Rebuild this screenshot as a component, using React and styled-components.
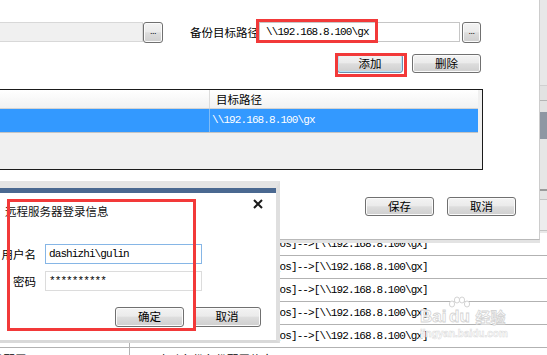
import React from 'react';
import styled, { createGlobalStyle, css } from 'styled-components';

const GlobalStyle = createGlobalStyle`
  html, body {
    margin: 0;
    padding: 0;
    background: #fff;
  }
  body {
    width: 547px;
    height: 355px;
    overflow: hidden;
    font-family: 'Noto Sans CJK SC', 'Noto Sans', sans-serif;
  }
`;

const cjk = css`
  font-family: 'Noto Sans CJK SC', 'Noto Sans', sans-serif;
  font-size: 11.5px;
  color: #111;
`;

const mono = css`
  font-family: 'Liberation Mono', 'Noto Sans CJK SC', monospace;
  font-size: 11px;
  letter-spacing: -0.9px;
`;

const Desktop = styled.div`
  position: relative;
  width: 547px;
  height: 355px;
  overflow: hidden;
  background: #fff;
`;

// window lying behind everything
const BackWindow = styled.div`
  display: flex;
  flex-direction: column;
  width: 607px;
  height: 100%;
  margin-left: -60px;
`;

const BackTop = styled.div`
  display: flex;
  justify-content: flex-end;
  height: 233px;
  flex-shrink: 0;
`;

const SideStrip = styled.div`
  display: flex;
  flex-direction: column;
  width: 7px;
  background: #e8e8e8;
`;

const StripPart = styled.div`
  height: ${(p) => p.$h}px;
  flex-shrink: 0;
  background: ${(p) => p.$bg || 'transparent'};
`;

const ListRow = styled.div`
  display: grid;
  grid-template-columns: 190px 1fr;
  height: 23px;
  flex-shrink: 0;
  box-sizing: border-box;
  border-bottom: 1px solid #b2b2b2;
`;

const ListCell = styled.div`
  padding-left: ${(p) => (p.$first ? 6 : 7)}px;
  line-height: 22px;
  white-space: nowrap;
  overflow: hidden;
  ${(p) => (p.$mono ? mono : cjk)}
  color: #000;
  ${(p) =>
    p.$first &&
    css`
      border-right: 1px solid #b2b2b2;
    `}
`;

// main settings window
const MainWindow = styled.div`
  position: absolute;
  left: -20px;
  top: 0;
  width: 560px;
  height: 240px;
  box-sizing: border-box;
  padding-top: 22px;
  background: #fff;
  border-right: 1px solid #cdcdcd;
  border-bottom: 1px solid #b9b9b9;
  box-shadow: 0 3px 0 #e3e3e3;
`;

const PathRow = styled.div`
  display: flex;
  align-items: flex-start;
  height: 21px;
`;

const FieldLabel = styled.span`
  ${cjk}
  color: #000;
  line-height: 20px;
  margin-left: ${(p) => p.$ml || 0}px;
  width: ${(p) => (p.$w ? `${p.$w}px` : 'auto')};
  text-align: ${(p) => p.$align || 'left'};
  margin-right: ${(p) => p.$mr || 0}px;
  white-space: nowrap;
`;

const Field = styled.input`
  box-sizing: border-box;
  width: ${(p) => p.$w}px;
  height: 20px;
  margin: 0;
  padding: 0 0 0 ${(p) => p.$pad || 5}px;
  border: 1px solid ${(p) => p.$border || '#c6c6c6'};
  background: ${(p) => p.$bg || '#fff'};
  outline: none;
  ${mono}
  color: #000;
`;

const FieldWrap = styled.div`
  position: relative;
  display: flex;
`;

const RedMark = styled.span`
  position: absolute;
  left: ${(p) => p.$x}px;
  top: ${(p) => p.$y}px;
  width: ${(p) => p.$w}px;
  height: ${(p) => p.$h}px;
  box-sizing: border-box;
  border: 3px solid #f23939;
  pointer-events: none;
`;

const Button = styled.button`
  position: relative;
  box-sizing: border-box;
  width: ${(p) => p.$w}px;
  height: ${(p) => p.$h || 19}px;
  margin: 0;
  padding: 0;
  ${cjk}
  color: #000;
  line-height: 1;
  border: 1px solid #707070;
  border-radius: 3px;
  background: linear-gradient(#f3f3f3 0%, #ebebeb 45%, #dddddd 52%, #cfcfcf 100%);
  box-shadow: inset 0 0 0 1px #fbfbfb;
  ${(p) =>
    p.$default &&
    css`
      border-color: #6d8fae;
      box-shadow: inset 0 0 0 1px #b9e4f7;
    `}
`;

const BrowseButton = styled(Button)`
  width: ${(p) => p.$w || 20}px;
  height: 21px;
  margin-left: ${(p) => p.$ml || 0}px;
  font-family: 'Liberation Sans', sans-serif;
  font-size: 9px;
  letter-spacing: -0.5px;
  padding-bottom: 2px;
`;

const ActionRow = styled.div`
  display: flex;
  justify-content: flex-end;
  gap: ${(p) => p.$gap}px;
  margin-top: ${(p) => p.$mt}px;
  padding-right: ${(p) => p.$pr}px;
`;

const Table = styled.div`
  margin-top: 16px;
  width: 503px;
  height: 81px;
  box-sizing: border-box;
  border: 1px solid #1b1b1b;
  border-left: none;
  padding-right: 4px;
  background: #f0f0f0;
`;

const TableHead = styled.div`
  display: grid;
  grid-template-columns: 230px 1fr;
  height: 19px;
  box-sizing: border-box;
  border-bottom: 1px solid #d3d3d3;
  background: linear-gradient(#ffffff, #f2f2f2);
`;

const TableRow = styled.div`
  display: grid;
  grid-template-columns: 230px 1fr;
  height: 24px;
  box-sizing: border-box;
  border-bottom: 1px solid #c4c4c4;
  background: #3399ff;
`;

const HeadCell = styled.div`
  ${cjk}
  color: #000;
  line-height: 18px;
  padding-left: 6px;
  ${(p) =>
    p.$first &&
    css`
      border-right: 1px solid #dcdcdc;
    `}
`;

const RowCell = styled.div`
  ${mono}
  color: #fff;
  line-height: 23px;
  padding-left: 2px;
  white-space: nowrap;
  ${(p) =>
    p.$first &&
    css`
      border-right: 1px solid #7fbcf7;
    `}
`;

// login dialog
const Dialog = styled.div`
  position: absolute;
  left: -20px;
  top: 181px;
  width: 300px;
  box-sizing: border-box;
  border-top: 7px solid #e4e4e4;
  border-right: 4px solid #dfdfdf;
  border-bottom: 3px solid #d9d9d9;
`;

const DialogBody = styled.div`
  position: relative;
  height: 147px;
  border-top: 5px solid #4a6890;
  background: #fff;
`;

const DialogHead = styled.div`
  display: flex;
  justify-content: space-between;
  align-items: flex-start;
  height: 51px;
  padding: 0 13px 0 25px;
`;

const DialogTitle = styled.span`
  ${cjk}
  color: #111;
  line-height: 14px;
  margin-top: 11px;
`;

const CloseIcon = styled.svg`
  margin-top: 6px;
`;

const FormRow = styled.div`
  display: flex;
  align-items: center;
  height: 20px;
  margin-top: ${(p) => p.$mt || 0}px;
`;

const Watermark = styled.div`
  position: absolute;
  left: 420px;
  top: 296px;
  display: flex;
  flex-direction: column;
  align-items: flex-start;
  pointer-events: none;
`;

const WmLogo = styled.div`
  display: flex;
  align-items: flex-end;
  font-family: 'Liberation Sans', sans-serif;
  font-weight: bold;
  font-size: 17px;
  line-height: 17px;
  color: #fff;
  -webkit-text-stroke: 0.8px #d4d4d4;
`;

const WmDu = styled.span`
  display: inline-flex;
  flex-direction: column;
  align-items: center;
  margin: 0 3px 0 2px;
`;

const WmCn = styled.span`
  font-family: 'Noto Sans CJK SC', sans-serif;
  font-size: 15px;
  margin-left: 2px;
`;

const WmUrl = styled.span`
  font-family: 'Liberation Sans', sans-serif;
  font-size: 10px;
  font-weight: bold;
  line-height: 12px;
  margin-top: 3px;
  color: #fff;
  -webkit-text-stroke: 0.5px #dadada;
`;

const routeText = '[D:\\Backup\\Router\\H3C-1\\Qos]-->[\\\\192.168.8.100\\gx]';

const App = () => {
  const rows = [0, 1, 2, 3, 4];

  return (
    <Desktop>
      <GlobalStyle />

      <BackWindow>
        <BackTop>
          <SideStrip>
            <StripPart $h={85} />
            <StripPart $h={1} $bg='#d0d0d0' />
            <StripPart $h={14} $bg='#e2e2e2' />
            <StripPart $h={1} $bg='#b4b4b4' />
            <StripPart $h={11} $bg='#e2e2e2' />
            <StripPart $h={27} $bg='#8e97a3' />
            <StripPart $h={50} $bg='#e6e6e6' />
            <StripPart $h={2} $bg='#9b9b9b' />
            <StripPart $h={8} $bg='#e4e4e4' />
            <StripPart $h={1} $bg='#c4c4c4' />
            <StripPart $h={30} $bg='#ededed' />
            <StripPart $h={1} $bg='#c4c4c4' />
          </SideStrip>
        </BackTop>
        {rows.map((r) => (
          <ListRow key={r}>
            <ListCell $first>路由器备份配置</ListCell>
            <ListCell $mono>{routeText}</ListCell>
          </ListRow>
        ))}
        <ListRow>
          <ListCell $first>路由器备份配置</ListCell>
          <ListCell>Qos自动备份备份配置信息</ListCell>
        </ListRow>
      </BackWindow>

      <Watermark>
        <WmLogo>
          <span>Bai</span>
          <WmDu>
            <svg width='22' height='12' viewBox='0 0 22 12'>
              <g fill='#fff' stroke='#d4d4d4' strokeWidth='1'>
                <ellipse cx='4' cy='8' rx='2.6' ry='3' />
                <ellipse cx='9' cy='4' rx='2.6' ry='3' />
                <ellipse cx='14' cy='4' rx='2.6' ry='3' />
                <ellipse cx='19' cy='8' rx='2.6' ry='3' />
              </g>
            </svg>
            <span>du</span>
          </WmDu>
          <WmCn>经验</WmCn>
        </WmLogo>
        <WmUrl>jingyan.baidu.com</WmUrl>
      </Watermark>

      <MainWindow>
        <PathRow>
          <Field $w={163} $bg='#f0f0f0' $border='#d8d8d8' readOnly value='' />
          <BrowseButton>...</BrowseButton>
          <FieldLabel $ml={27}>备份目标路径</FieldLabel>
          <FieldWrap>
            <Field $w={201} $pad={6} readOnly value='\\192.168.8.100\gx' />
            <RedMark $x={-3} $y={-3} $w={122} $h={24} />
          </FieldWrap>
          <BrowseButton $ml={2} $w={19}>
            ...
          </BrowseButton>
        </PathRow>

        <ActionRow $mt={11} $gap={9} $pr={58}>
          <Button $w={66} $default>
            添加
            <RedMark $x={-3} $y={-2} $w={72} $h={24} />
          </Button>
          <Button $w={69}>删除</Button>
        </ActionRow>

        <Table>
          <TableHead>
            <HeadCell $first />
            <HeadCell>目标路径</HeadCell>
          </TableHead>
          <TableRow>
            <RowCell $first />
            <RowCell>\\192.168.8.100\gx</RowCell>
          </TableRow>
        </Table>

        <ActionRow $mt={27} $gap={13} $pr={23}>
          <Button $w={69}>保存</Button>
          <Button $w={69}>取消</Button>
        </ActionRow>
      </MainWindow>

      <Dialog>
        <DialogBody>
          <DialogHead>
            <DialogTitle>远程服务器登录信息</DialogTitle>
            <CloseIcon width='10' height='10' viewBox='0 0 10 10'>
              <path d='M1 1 L9 9 M9 1 L1 9' stroke='#1a1a1a' strokeWidth='2' />
            </CloseIcon>
          </DialogHead>
          <FormRow>
            <FieldLabel $w={56} $align='right' $mr={9}>
              用户名
            </FieldLabel>
            <Field $w={157} $pad={3} $border='#86b6e6' readOnly value='dashizhi\gulin' />
          </FormRow>
          <FormRow $mt={7}>
            <FieldLabel $w={56} $align='right' $mr={9}>
              密码
            </FieldLabel>
            <Field $w={157} $pad={3} $border='#dcdcdc' readOnly value='**********' />
          </FormRow>
          <ActionRow $mt={16} $gap={9} $pr={15}>
            <Button $w={69} $h={20}>
              确定
            </Button>
            <Button $w={68} $h={20}>
              取消
            </Button>
          </ActionRow>
          <RedMark $x={27} $y={6} $w={189} $h={132} />
        </DialogBody>
      </Dialog>
    </Desktop>
  );
};

export default App;
